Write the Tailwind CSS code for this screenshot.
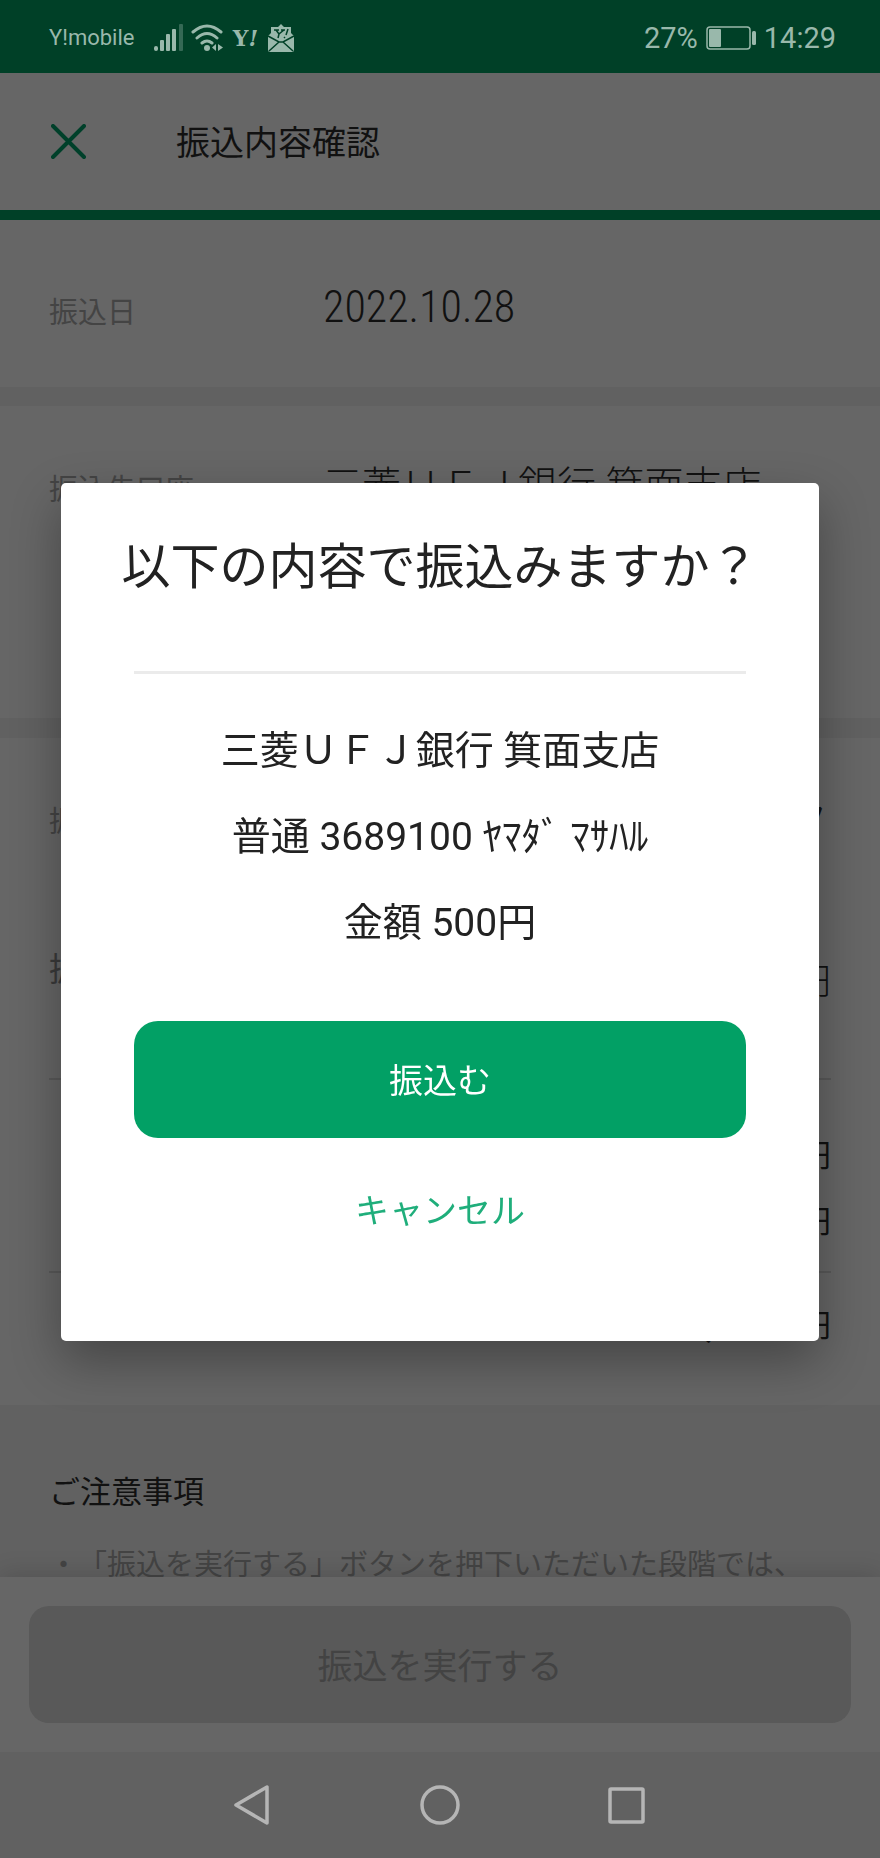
<!DOCTYPE html>
<html lang="ja">
<head>
<meta charset="utf-8">
<meta name="viewport" content="width=device-width, initial-scale=1">
<title>振込内容確認</title>
<script src="https://cdn.jsdelivr.net/npm/@tailwindcss/browser@4"></script>
</head>
<body class="bg-[#616161] font-['Roboto','Noto_Sans_CJK_JP',sans-serif] text-[#111111] [text-spacing-trim:space-all]">
<div class="flex h-screen flex-col">

  <!-- Status bar -->
  <div class="flex h-[73px] shrink-0 items-center justify-between bg-[#004027] pt-0.5 pr-11 pl-[49px] text-[#99b8ab]">
    <div class="flex items-center gap-2">
      <span class="mr-3 text-[22px] leading-8">Y!mobile</span>
      <svg class="h-7 w-[29px]" viewBox="0 0 29 28" fill="currentColor" aria-hidden="true">
        <rect x="0" y="22" width="4" height="5" rx="2"/>
        <rect x="6" y="16" width="4" height="11" rx="1"/>
        <rect x="12" y="10" width="4" height="17" rx="1"/>
        <rect x="18" y="5" width="4" height="22" rx="1"/>
        <rect x="25" y="0" width="4" height="27" rx="1" opacity=".35"/>
      </svg>
      <svg class="h-7 w-8" viewBox="0 0 32 28" fill="none" stroke="currentColor" stroke-width="3" stroke-linecap="round" aria-hidden="true">
        <path d="M2 8Q16-4 30 8M6 14Q16 5 26 14M11 19Q16 15 21 19"/>
        <circle cx="16" cy="24" r="3" fill="currentColor" stroke="none"/>
        <path d="M25 20v7l-4-3.500zM27 20v7l5-3.500z" fill="currentColor" stroke="none"/>
      </svg>
      <span class="w-7 text-center font-['DejaVu_Serif',serif] text-[22px] leading-8 font-bold">Y<i>!</i></span>
      <svg class="h-7 w-7" viewBox="0 0 28 28" aria-hidden="true">
        <path fill="currentColor" d="M4 3h7l3-3 3 3h7v6l3 3v14q0 2-2 2H3q-2 0-2-2V12l3-3z"/>
        <path fill="none" stroke="#004027" stroke-width="1.500" d="M1 12l11 6h4l11-6M2 27l10-9M26 27l-10-9"/>
        <path fill="none" stroke="#004027" stroke-width="1.500" d="M7 6h5M9 6l3 4M17 6l-5 4-1 4M14 6h4M21 5l-2 6M18 13l-1 1"/>
      </svg>
    </div>
    <div class="flex items-center gap-2 text-[29px] leading-8">
      <span>27%</span>
      <svg class="h-6 w-[50px]" viewBox="0 0 50 24" aria-hidden="true">
        <rect x="1" y="1" width="43" height="22" rx="3" fill="none" stroke="currentColor" stroke-width="1.500"/>
        <rect x="3" y="3" width="12" height="18" rx="1" fill="currentColor"/>
        <rect x="46" y="5" width="4" height="14" rx="1.500" fill="currentColor"/>
      </svg>
      <span>14:29</span>
    </div>
  </div>

  <!-- App header -->
  <header class="flex h-[147px] shrink-0 items-center border-b-10 border-[#004027] bg-[#666666] pl-[51px]">
    <button type="button" aria-label="閉じる" class="mr-[90px] text-[#00402a]">
      <svg class="h-[35px] w-[35px]" viewBox="0 0 35 35" fill="none" stroke="currentColor" stroke-width="4" stroke-linecap="round"><path d="M2 2l31 31M33 2L2 33"/></svg>
    </button>
    <h1 class="pt-0.5 text-[34px] leading-10">振込内容確認</h1>
  </header>

  <!-- Transfer details -->
  <main class="min-h-0 flex-1 overflow-hidden">
    <section class="flex h-[167px] items-center bg-[#666666] px-[49px] pt-1.5">
      <span class="w-[274px] pt-3 text-[29px] leading-10 text-[#444444]">振込日</span>
      <span class="font-['Roboto_Condensed','Liberation_Sans_Narrow',sans-serif] text-[44px] leading-14 font-light">2022.10.28</span>
    </section>
    <section class="mt-[19px] flex h-[312px] bg-[#666666] px-[49px] pt-[60px]">
      <span class="w-[274px] pt-1 text-[29px] leading-10 text-[#444444]">振込先口座</span>
      <span class="text-[39px] leading-10 font-light">三菱ＵＦＪ銀行 箕面支店</span>
    </section>
    <section class="mt-5 h-[667px] bg-[#666666] px-[49px] pt-[62px]">
      <div class="flex justify-between">
        <span class="pt-0.5 text-[29px] leading-10 text-[#444444]">振込人名</span>
        <span class="pr-2 text-[39px] leading-10">ﾔﾏ</span>
      </div>
      <div class="mt-[108px] flex h-[130px] justify-between border-b-2 border-[#595959]">
        <span class="text-[33px] leading-10 text-[#3a3a3a]">振込金額</span>
        <span class="pt-3 text-[36px] leading-10 font-light">500円</span>
      </div>
      <div class="flex flex-col items-end gap-[26px] border-b-2 border-[#595959] pt-[56px] pb-[29px] text-[31px] leading-10">
        <span>500円</span>
        <span>0円</span>
      </div>
      <div class="pt-[27px] text-right text-[31px] leading-10"><span class="mr-1 text-[48px] leading-10">1,500</span>円</div>
    </section>
    <section class="px-[49px] pt-[68px]">
      <h2 class="text-[31px] leading-10">ご注意事項</h2>
      <p class="mt-8 text-[29px] leading-10 whitespace-nowrap text-[#444444]">・「振込を実行する」ボタンを押下いただいた段階では、</p>
    </section>
  </main>

  <!-- Submit bar -->
  <footer class="relative shrink-0 bg-[#666666] px-[29px] py-[29px] shadow-[0_-2px_24px_rgba(0,0,0,0.16)]">
    <button type="button" disabled class="h-[117px] w-full rounded-[20px] bg-[#595959] pt-2 text-[35px] text-[#434343]">振込を実行する</button>
  </footer>

  <!-- System navigation -->
  <nav class="relative flex h-[106px] shrink-0 items-center justify-center gap-[147px] bg-[#616161] text-[#b5b5b5]">
    <button type="button" aria-label="戻る"><svg class="size-10" viewBox="0 0 40 40" fill="none" stroke="currentColor" stroke-width="3.500" stroke-linejoin="round"><path d="M34 2v36L3 20z"/></svg></button>
    <button type="button" aria-label="ホーム"><svg class="size-10" viewBox="0 0 40 40" fill="none" stroke="currentColor" stroke-width="3.500"><circle cx="20" cy="20" r="18"/></svg></button>
    <button type="button" aria-label="履歴"><svg class="size-10" viewBox="0 0 40 40" fill="none" stroke="currentColor" stroke-width="3.500"><rect x="3" y="4" width="33" height="33" rx="1"/></svg></button>
  </nav>
</div>

<!-- Confirmation dialog -->
<div class="fixed inset-0 flex items-center px-[61px] pb-[34px]">
  <div role="dialog" aria-modal="true" aria-labelledby="dialog-title" class="w-full rounded-[5px] bg-white px-[60px] pt-[55px] pb-[110px] text-center text-[#222222] shadow-[0_20px_50px_rgba(0,0,0,0.32)]">
    <h2 id="dialog-title" class="text-[49px] leading-15 whitespace-nowrap">以下の内容で振込みますか？</h2>
    <div class="mx-[13px] mt-[73px]">
      <div class="border-t-3 border-[#ebebeb] pt-[34px] text-[39px] leading-[86px]">
        <p>三菱ＵＦＪ銀行 箕面支店</p>
        <p>普通 3689100 ﾔﾏﾀﾞ ﾏｻﾊﾙ</p>
        <p>金額 500円</p>
      </div>
      <button type="button" class="mt-[55px] h-[117px] w-full rounded-3xl bg-[#02a065] pt-1 text-[34px] text-white">振込む</button>
      <button type="button" class="mt-[53px] block w-full text-[34px] leading-10 text-[#1fae7b]">キャンセル</button>
    </div>
  </div>
</div>
</body>
</html>
